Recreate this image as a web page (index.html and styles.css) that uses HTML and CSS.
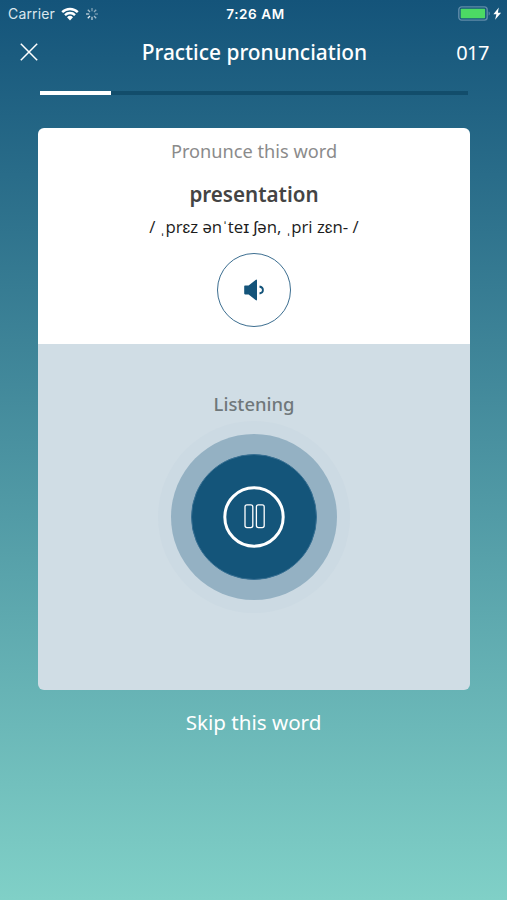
FILE: index.html
```html
<!DOCTYPE html>
<html lang="en">
<head>
  <meta charset="UTF-8" />
  <meta name="viewport" content="width=device-width, initial-scale=1.0"/>
  <title>Practice pronunciation</title>
  <link rel="stylesheet" href="styles.css">
</head>
<body>
  <div class="screen">
    <div class="status-bar">
      <div class="status-left">
        <span class="carrier">Carrier</span>
        <svg class="wifi" width="18" height="14" viewBox="0 0 18 14">
          <path d="M1.2 5.2a11 11 0 0 1 15.6 0" />
          <path d="M4 8.1a7 7 0 0 1 10 0" />
          <path class="dot" d="M9 13.4L6 10.3a4.3 4.3 0 0 1 6 0z" />
        </svg>
        <svg class="spinner" width="14" height="14" viewBox="0 0 14 14">
          <path d="M7 1v3.2" opacity="0.45" />
          <path d="M11.2 2.8L9 5" opacity="0.5" />
          <path d="M13 7H9.8" opacity="0.4" />
          <path d="M11.2 11.2L9 9" opacity="0.6" />
          <path d="M7 13V9.8" opacity="0.7" />
          <path d="M2.8 11.2L5 9" opacity="0.9" />
          <path d="M1 7h3.2" opacity="0.75" />
          <path d="M2.8 2.8L5 5" opacity="0.6" />
        </svg>
      </div>
      <span class="time">7:26 AM</span>
      <div class="status-right">
        <svg width="45" height="16" viewBox="0 0 45 16">
          <rect x="0.8" y="0.9" width="28.4" height="13.2" rx="2.8" fill="none" stroke="#5f8ba8" stroke-width="1.4" />
          <rect x="2.7" y="2.8" width="24.4" height="9.4" rx="0.8" fill="#4cd964" />
          <path d="M30.6 5.5c1.6.4 1.6 3.6 0 4z" fill="#5f8ba8" />
          <path d="M40.8 1.6l-5.4 6.7h3l-1.3 5.5 6-7h-3.2z" fill="#fff" />
        </svg>
      </div>
    </div>

    <div class="header">
      <svg class="close" width="18" height="18" viewBox="0 0 18 18">
        <path d="M0.8 0.8l16.4 16.4M17.2 0.8L0.8 17.2" />
      </svg>
      <h1 class="title">Practice pronunciation</h1>
      <span class="counter">017</span>
    </div>

    <div class="progress">
      <div class="progress-fill"></div>
    </div>

    <div class="card">
      <div class="word-panel">
        <p class="prompt">Pronunce this word</p>
        <h2 class="word">presentation</h2>
        <p class="phonetic">/ ˌprɛz ənˈteɪ ʃən, ˌpri zɛn- /</p>
        <button class="play">
          <svg width="22" height="22" viewBox="0 0 22 22">
            <path d="M2 6.4h3.6L12.6 0.9q1.4-.8 1.4.6v19q0 1.4-1.4.6L5.6 15.4H2q-.8 0-.8-.8V7.2q0-.8.8-.8z" fill="#14547a" />
            <path d="M16.5 7.5c4.6 0.8 4.6 6.2 0 7" fill="none" stroke="#14547a" stroke-width="1.8" />
          </svg>
        </button>
      </div>

      <div class="listen-panel">
        <p class="listening">Listening</p>
        <div class="pulse">
          <div class="pulse-mid">
            <button class="record">
              <svg width="62" height="62" viewBox="0 0 62 62">
                <circle cx="31" cy="31" r="29.2" stroke-width="3" />
                <rect x="22" y="18.8" width="7.8" height="22.8" rx="2" stroke-width="1.3" />
                <rect x="33.4" y="18.8" width="7.8" height="22.8" rx="2" stroke-width="1.3" />
              </svg>
            </button>
          </div>
        </div>
      </div>
    </div>

    <a class="skip">Skip this word</a>
  </div>
</body>
</html>
```
FILE: styles.css
```css
body {
  font-family: 'Noto Sans', 'Open Sans', sans-serif;
  margin: 0;
}

h1, h2, p {
  margin: 0;
}

button {
  box-sizing: border-box;
  padding: 0;
  cursor: pointer;
}

svg {
  display: block;
}

.screen {
  height: 900px;
  overflow: hidden;
  background: linear-gradient(#14547a, #80d0c7);
  color: #fff;
}

.status-bar {
  display: grid;
  grid-template-columns: 1fr auto 1fr;
  align-items: center;
  height: 27px;
  padding: 0 4px 0 8px;
  font-family: Inter, sans-serif;
  font-size: 13.5px;
}

.status-left {
  display: flex;
  align-items: center;
  gap: 6px;
}

.carrier {
  color: #dbe7ee;
  font-size: 14px;
  letter-spacing: 0.15px;
}

.wifi {
  fill: none;
  stroke: #fff;
  stroke-width: 2.4;
}

.wifi .dot {
  fill: #fff;
  stroke: none;
}

.spinner {
  stroke: #fff;
  stroke-width: 1.3;
}

.time {
  font-weight: 600;
  letter-spacing: 0.6px;
}

.status-right {
  display: flex;
  justify-content: flex-end;
}

.header {
  display: grid;
  grid-template-columns: 60px 1fr 60px;
  align-items: center;
  height: 50px;
  padding: 0 18px 0 20px;
}

.close {
  fill: none;
  stroke: #fff;
  stroke-width: 1.5;
}

.title {
  font-size: 20.9px;
  font-weight: 500;
  text-align: center;
  white-space: nowrap;
}

.counter {
  font-size: 20px;
  letter-spacing: -0.5px;
  text-align: right;
}

.progress {
  height: 4px;
  margin: 14px 39px 0 40px;
  background: #124d6b;
}

.progress-fill {
  width: 71px;
  height: 4px;
  background: #fff;
}

.card {
  height: 562px;
  margin: 33px 37px 0 38px;
  border-radius: 6px;
  overflow: hidden;
}

.word-panel {
  display: flex;
  flex-direction: column;
  align-items: center;
  height: 216px;
  background: #fff;
}

.prompt {
  margin-top: 8px;
  color: #8b8b8b;
  font-size: 18.2px;
  line-height: 30px;
}

.word {
  margin-top: 13px;
  color: #444;
  font-size: 20.6px;
  font-weight: 600;
  line-height: 30px;
}

.phonetic {
  margin-top: 4px;
  color: #1c1c1c;
  font-family: 'Open Sans', sans-serif;
  font-size: 16.8px;
  line-height: 28px;
}

.play {
  display: flex;
  align-items: center;
  justify-content: center;
  width: 74px;
  height: 74px;
  margin-top: 12px;
  border: 1.5px solid #3c6e90;
  border-radius: 50%;
  background: #fff;
}

.listen-panel {
  display: flex;
  flex-direction: column;
  align-items: center;
  height: 346px;
  background: #d0dde5;
}

.listening {
  margin-top: 45px;
  color: #6f777a;
  font-size: 18.4px;
  font-weight: 500;
  line-height: 30px;
}

.pulse, .pulse-mid, .record {
  display: flex;
  align-items: center;
  justify-content: center;
  border-radius: 50%;
}

.pulse {
  width: 192px;
  height: 192px;
  margin-top: 2px;
  background: #ccdae3;
}

.pulse-mid {
  width: 166px;
  height: 166px;
  background: #94b1c3;
}

.record {
  width: 126px;
  height: 126px;
  border: 1px solid #376f92;
  background: #14557a;
}

.record svg {
  fill: none;
  stroke: #fff;
}

.skip {
  display: block;
  margin-top: 17px;
  font-size: 20.6px;
  line-height: 30px;
  text-align: center;
}
```
